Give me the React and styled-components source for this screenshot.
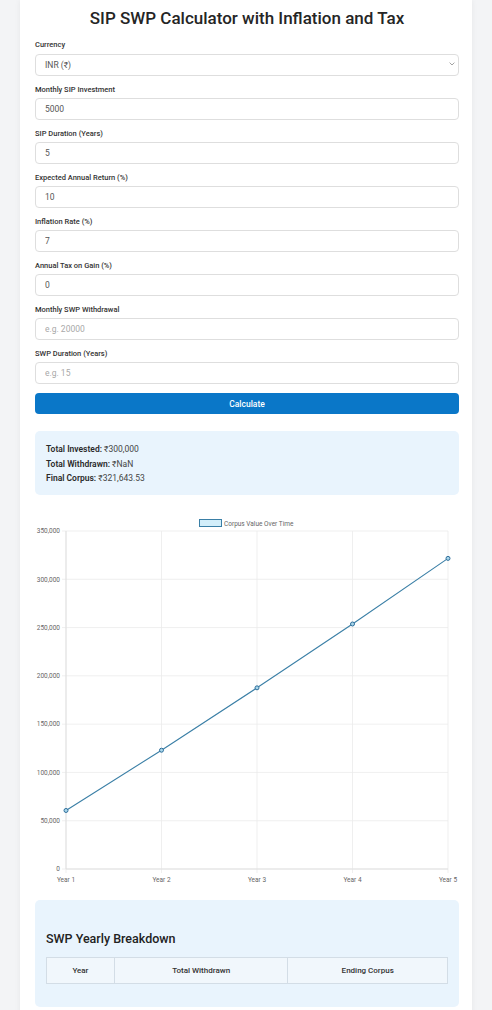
import React from 'react';
import styled, { createGlobalStyle } from 'styled-components';

const GlobalStyle = createGlobalStyle`
	body {
		margin: 0;
		background: #f3f4f6;
		font-family: Roboto, "Liberation Sans", Arial, sans-serif;
	}
	* { box-sizing: border-box; }
`

const Card = styled.div`
	width: 452px;
	margin: 0 20px;
	background: #fff;
	padding: 6px 13px 20px 15px;
	box-shadow: 0 0 6px rgba(0, 0, 0, 0.06);
`

const Title = styled.h2`
	margin: 0 0 10px;
	font-size: 17px;
	line-height: 24px;
	font-weight: 500;
	text-align: center;
	color: #252525;
`

const Field = styled.div`
	display: flex;
	flex-direction: column;
	margin-bottom: 9px;
`

const Label = styled.label`
	font-size: 7.5px;
	line-height: 10px;
	font-weight: 500;
	color: #333;
	margin-bottom: 3px;
`

const Input = styled.input`
	height: 22px;
	width: 100%;
	border: 1px solid #dedede;
	border-radius: 4px;
	padding: 0 9px;
	font-family: inherit;
	font-size: 8.5px;
	color: #555;
	background: #fff;
	outline: none;
	&::placeholder { color: #a8a8a8; }
`

const SelectWrap = styled.div`
	position: relative;
`

const Select = styled.select`
	appearance: none;
	height: 22px;
	width: 100%;
	border: 1px solid #dedede;
	border-radius: 4px;
	padding: 0 9px;
	font-family: inherit;
	font-size: 8.5px;
	color: #555;
	background: #fff;
	outline: none;
`

const Chevron = styled.svg`
	position: absolute;
	right: 4px;
	top: 9px;
	width: 6px;
	height: 4px;
`

const Button = styled.button`
	display: block;
	width: 100%;
	height: 21px;
	margin-top: 2px;
	border: none;
	border-radius: 4px;
	background: #0a77c8;
	color: #fff;
	font-family: inherit;
	font-size: 8.5px;
	font-weight: 500;
`

const Summary = styled.div`
	margin-top: 17px;
	height: 64px;
	background: #e9f4fd;
	border-radius: 5px;
	padding: 11px 11px;
	font-size: 8.5px;
	line-height: 14.5px;
	color: #444;
`

const SummaryLine = styled.div`
	b { font-weight: 600; color: #2a2a2a; }
`

const ChartBox = styled.div`
	margin-top: 14px;
	height: 380px;
`

const Breakdown = styled.div`
	margin-top: 11px;
	background: #e9f4fd;
	border-radius: 5px;
	padding: 11px 11px 23px;
`

const BreakdownTitle = styled.h3`
	margin: 20px 0 10px;
	font-size: 12.5px;
	line-height: 16px;
	font-weight: 500;
	color: #222;
`

const Table = styled.table`
	width: 402px;
	border-collapse: collapse;
`

const Th = styled.th`
	height: 26px;
	width: ${p => p.w}px;
	border: 1px solid #d3dde6;
	background: #f1f7fc;
	font-size: 8px;
	font-weight: 500;
	color: #333;
`

const W = 424
const PL = 31, PR = 413, PT = 22, PB = 360
const MAX = 350000
const data = [60600, 123000, 187600, 253700, 321643.53]

function CorpusChart() {
	const xs = data.map((_, i) => PL + (PR - PL) * i / (data.length - 1))
	const y = v => PB - (PB - PT) * v / MAX
	const ticks = [0, 50000, 100000, 150000, 200000, 250000, 300000, 350000]
	const pts = data.map((v, i) => `${xs[i]},${y(v)}`).join(' ')
	return (
		<svg width={W} height={380} style={{ display: 'block' }} fontFamily="Roboto, 'Liberation Sans', sans-serif">
			<rect x="164.5" y="10.5" width="22" height="7" fill="#d2eefa" stroke="#3a7fa6" strokeWidth="1" />
			<text x="189" y="16.5" fontSize="6.5" fill="#666">Corpus Value Over Time</text>
			{ticks.map(t => (
				<g key={t}>
					<line x1={PL - 4} x2={PR} y1={y(t)} y2={y(t)} stroke="#ebebeb" strokeWidth="0.8" />
					<text x={PL - 6} y={y(t) + 2.3} fontSize="6.5" fill="#666" textAnchor="end">{t.toLocaleString('en-US')}</text>
				</g>
			))}
			{xs.map((x, i) => (
				<g key={i}>
					<line x1={x} x2={x} y1={PT} y2={PB + 4} stroke="#ebebeb" strokeWidth="0.8" />
					<text x={x} y={PB + 13} fontSize="6.5" fill="#666" textAnchor="middle">Year {i + 1}</text>
				</g>
			))}
			<line x1={PL} x2={PL} y1={PT} y2={PB} stroke="#dcdcdc" strokeWidth="0.8" />
			<line x1={PL} x2={PR} y1={PB} y2={PB} stroke="#dcdcdc" strokeWidth="0.8" />
			<polyline points={pts} fill="none" stroke="#3a7fa6" strokeWidth="1.1" />
			{data.map((v, i) => (
				<circle key={i} cx={xs[i]} cy={y(v)} r="2" fill="#a9d6ea" stroke="#2f6f9c" strokeWidth="1" />
			))}
		</svg>
	)
}

const fields = [
	{ label: 'Monthly SIP Investment', value: '5000' },
	{ label: 'SIP Duration (Years)', value: '5' },
	{ label: 'Expected Annual Return (%)', value: '10' },
	{ label: 'Inflation Rate (%)', value: '7' },
	{ label: 'Annual Tax on Gain (%)', value: '0' },
	{ label: 'Monthly SWP Withdrawal', placeholder: 'e.g. 20000' },
	{ label: 'SWP Duration (Years)', placeholder: 'e.g. 15' },
]

export default function App() {
	return (
		<>
			<GlobalStyle />
			<Card>
				<Title>SIP SWP Calculator with Inflation and Tax</Title>
				<Field>
					<Label>Currency</Label>
					<SelectWrap>
						<Select defaultValue="INR">
							<option value="INR">INR (₹)</option>
							<option value="USD">USD ($)</option>
						</Select>
						<Chevron viewBox="0 0 6 4">
							<path d="M0.6 0.6 L3 3 L5.4 0.6" fill="none" stroke="#999" strokeWidth="0.9" />
						</Chevron>
					</SelectWrap>
				</Field>
				{fields.map(f => (
					<Field key={f.label}>
						<Label>{f.label}</Label>
						<Input type="text" defaultValue={f.value} placeholder={f.placeholder} />
					</Field>
				))}
				<Button>Calculate</Button>

				<Summary>
					<SummaryLine><b>Total Invested:</b> ₹300,000</SummaryLine>
					<SummaryLine><b>Total Withdrawn:</b> ₹NaN</SummaryLine>
					<SummaryLine><b>Final Corpus:</b> ₹321,643.53</SummaryLine>
				</Summary>

				<ChartBox>
					<CorpusChart />
				</ChartBox>

				<Breakdown>
					<BreakdownTitle>SWP Yearly Breakdown</BreakdownTitle>
					<Table>
						<thead>
							<tr>
								<Th w={68}>Year</Th>
								<Th w={174}>Total Withdrawn</Th>
								<Th w={160}>Ending Corpus</Th>
							</tr>
						</thead>
					</Table>
				</Breakdown>
			</Card>
		</>
	)
}
